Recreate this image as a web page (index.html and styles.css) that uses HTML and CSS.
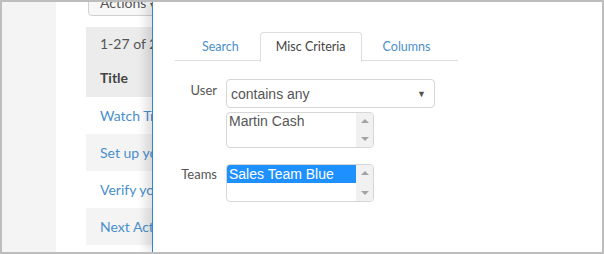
FILE: index.html
```html
<!DOCTYPE html>
<html>
<head>
<meta charset="utf-8">
<link rel="stylesheet" href="styles.css">
</head>
<body>
<div class="frame">
  <div class="sidebar"></div>
  <div class="main">
    <div class="main-inner">
      <div class="actions-btn">Actions <span class="caret">&#9662;</span></div>
      <div class="table">
        <div class="thead">
          <div class="count">1-27 of 27</div>
          <div class="th">Title</div>
        </div>
        <div class="row">Watch Training Video</div>
        <div class="row alt">Set up your account</div>
        <div class="row">Verify your email</div>
        <div class="row alt">Next Action Items</div>
      </div>
    </div>
  </div>
  <div class="panel">
    <div class="tabs">
      <div class="tab">Search</div>
      <div class="tab active">Misc Criteria</div>
      <div class="tab">Columns</div>
    </div>
    <div class="form">
      <div class="label label-user">User</div>
      <div class="field">
        <div class="select">
          <span>contains any</span>
          <span class="arrow">&#9660;</span>
        </div>
        <div class="listbox lb-user">
          <div class="options">
            <div class="option">Martin Cash</div>
          </div>
          <div class="scrollbar">
            <span class="tri up"></span>
            <span class="tri down"></span>
          </div>
        </div>
      </div>
      <div class="label label-teams">Teams</div>
      <div class="field">
        <div class="listbox lb-teams">
          <div class="options">
            <div class="option selected">Sales Team Blue</div>
          </div>
          <div class="scrollbar">
            <span class="tri up"></span>
            <span class="tri down"></span>
          </div>
        </div>
      </div>
    </div>
  </div>
</div>
</body>
</html>
```

FILE: styles.css
```css
html, body {
  margin: 0;
  padding: 0;
  width: 604px;
  height: 254px;
  overflow: hidden;
  background: #fff;
}

.frame {
  box-sizing: border-box;
  width: 604px;
  height: 254px;
  border: 2px solid #bdbdbd;
  display: flex;
  overflow: hidden;
  font-family: Lato, "Open Sans", sans-serif;
}

.sidebar {
  width: 54px;
  flex: none;
  background: #f4f4f4;
}

.main {
  width: 96px;
  flex: none;
  overflow: hidden;
  background: #fff;
}

.main-inner {
  width: 400px;
  padding-left: 30px;
}

.actions-btn {
  box-sizing: border-box;
  margin-top: -16px;
  margin-left: 2px;
  width: 90px;
  height: 30px;
  border: 1px solid #d0d0d0;
  border-radius: 4px;
  background: #f7f7f7;
  color: #555;
  font-size: 14px;
  line-height: 31px;
  padding-left: 11px;
}

.caret {
  font-size: 10px;
}

.table {
  margin-top: 11px;
  font-size: 14px;
}

.thead {
  background: #ececec;
  padding-left: 14px;
}

.count {
  height: 34px;
  line-height: 34px;
  color: #555;
}

.th {
  height: 36px;
  line-height: 34px;
  font-weight: bold;
  color: #444;
}

.row {
  height: 37px;
  line-height: 37px;
  padding-left: 14px;
  color: #4a8fcc;
  white-space: nowrap;
}

.row.alt {
  background: #f4f4f4;
}

.panel {
  flex: 1;
  position: relative;
  z-index: 1;
  background: #fff;
  border-left: 1px solid #2d87d6;
  box-shadow: -6px 0 10px rgba(0, 0, 0, 0.13);
  padding-left: 22px;
  padding-top: 28px;
}

.tabs {
  width: 283px;
  display: flex;
  gap: 5px;
  padding-left: 11px;
  box-sizing: border-box;
  border-bottom: 1px solid #dedede;
  height: 31px;
  font-size: 12.5px;
}

.tab {
  box-sizing: border-box;
  padding: 0 15px;
  height: 31px;
  line-height: 28px;
  margin-top: 2px;
  color: #4a8fcc;
  border: 1px solid transparent;
  border-bottom: none;
}

.tab.active {
  color: #444;
  border-color: #dedede;
  border-radius: 4px 4px 0 0;
  background: #fff;
  height: 30px;
  margin-bottom: -1px;
  padding-bottom: 1px;
}

.form {
  margin-top: 18px;
  display: grid;
  grid-template-columns: 42px auto;
  column-gap: 9px;
  row-gap: 16px;
  justify-content: start;
}

.label {
  text-align: right;
  font-size: 13px;
  color: #555;
}

.label-user {
  padding-top: 3px;
}

.label-teams {
  padding-top: 2px;
}

.field {
  display: flex;
  flex-direction: column;
  gap: 4px;
}

.select {
  box-sizing: border-box;
  width: 209px;
  height: 29px;
  border: 1px solid #d6d6d6;
  border-radius: 4px;
  display: flex;
  align-items: center;
  justify-content: space-between;
  padding: 0 8px 0 4px;
  font-family: "Liberation Sans", Arial, sans-serif;
  font-size: 14px;
  color: #555;
}

.arrow {
  font-size: 9px;
  color: #555;
}

.listbox {
  box-sizing: border-box;
  width: 148px;
  border: 1px solid #d6d6d6;
  border-radius: 4px;
  display: flex;
  overflow: hidden;
  font-family: "Liberation Sans", Arial, sans-serif;
  font-size: 14px;
}

.lb-user {
  height: 36px;
}

.lb-teams {
  height: 38px;
}

.options {
  flex: 1;
}

.option {
  height: 16px;
  line-height: 16px;
  padding-left: 2px;
  color: #555;
}

.option.selected {
  background: #1e90ff;
  color: #fff;
  height: 18px;
  line-height: 18px;
}

.scrollbar {
  width: 17px;
  flex: none;
  background: #f1f1f1;
  display: flex;
  flex-direction: column;
  justify-content: space-between;
  align-items: center;
  padding: 6px 0;
  box-sizing: border-box;
}

.tri {
  width: 0;
  height: 0;
  border-left: 4px solid transparent;
  border-right: 4px solid transparent;
}

.tri.up {
  border-bottom: 4px solid #a3a3a3;
}

.tri.down {
  border-top: 4px solid #a3a3a3;
}
```
